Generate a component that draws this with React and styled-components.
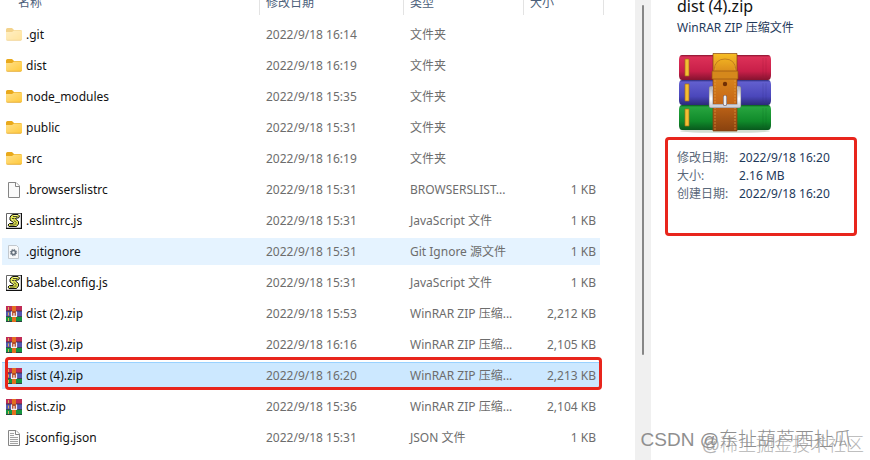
import React from "react";
import styled, { createGlobalStyle } from "styled-components";

const GlobalStyle = createGlobalStyle`
  * { box-sizing: border-box; }
  body {
    margin: 0;
    background: #fff;
    font-family: "Noto Sans", "Noto Sans CJK SC", sans-serif;
    font-size: 12px;
    color: #6d6d6d;
  }
`;

const Explorer = styled.div`
  position: relative;
  display: grid;
  grid-template-columns: minmax(0, 1fr) 16px 219px;
  height: 100vh;
  overflow: hidden;
`;

const ListPane = styled.main`
  padding: 0 31px 0 2px;
  min-width: 0;
`;

const FileTable = styled.table`
  width: 100%;
  table-layout: fixed;
  border-collapse: separate;
  border-spacing: 0;
`;

const Col = styled.col`
  width: ${(p) => p.$width || "auto"};
`;

const HeadCell = styled.th`
  height: 17px;
  padding: 0 0 2px;
  font-weight: 400;
`;

const SortButton = styled.button`
  display: flex;
  align-items: flex-end;
  width: 100%;
  height: 15px;
  padding: 0 0 4px ${(p) => p.$indent || "6px"};
  border: 0;
  border-right: 1px solid #e3e3e3;
  background: none;
  color: #4c607a;
  font: inherit;
  line-height: 17px;
`;

const FileRow = styled.tr`
  position: relative;
  --fill: ${(p) => (p.$state === "selected" ? "#cce8ff" : p.$state === "hover" ? "#e5f3ff" : "transparent")};
  --edge: ${(p) => (p.$state === "selected" ? "#99d1ff" : "transparent")};
`;

const Cell = styled.td`
  height: 31px;
  padding: 0 4px 0 6px;
  border-top: 4px solid transparent;
  background: var(--fill);
  background-clip: padding-box;
  box-shadow: inset 0 1px var(--edge);
  line-height: 27px;
  white-space: nowrap;
  overflow: hidden;
  text-align: ${(p) => p.$align || "left"};
`;

const NameCell = styled(Cell)`
  padding-left: 4px;
  color: #111;
`;

const FileName = styled.span`
  display: flex;
  align-items: center;
  gap: 4px;
  svg { flex: none; }
`;

const EdgeCell = styled.td`
  padding: 0;
`;

const Marker = styled.span`
  position: absolute;
  inset: ${(p) => p.$inset};
  border: 3px solid #e8251c;
  border-radius: 4px;
  pointer-events: none;
`;

const Track = styled.div`
  display: flex;
  justify-content: center;
  padding-top: 5px;
  background: #f0f0f0;
`;

const Thumb = styled.div`
  width: 2px;
  height: 77%;
  border-radius: 1px;
  background: #868686;
`;

const Preview = styled.aside`
  padding-left: 14px;
  color: #1e395b;
`;

const Title = styled.h1`
  margin: -5px 0 0 12px;
  color: #111;
  font-size: 16px;
  font-weight: 400;
  line-height: 22px;
`;

const Kind = styled.p`
  margin: 0 0 14px 12px;
  line-height: 22px;
`;

const Art = styled.div`
  margin-left: 12px;
  height: 84px;
`;

const Details = styled.dl`
  display: grid;
  grid-template-columns: 62px 1fr;
  align-content: start;
  width: 192px;
  height: 99px;
  margin: 0;
  padding: 9px 0 0 9px;
  border: 3px solid #e8251c;
  border-radius: 4px;
  line-height: 18px;
`;

const Term = styled.dt`
  color: #5a6779;
`;

const Value = styled.dd`
  margin: 0;
`;

const Watermark = styled.span`
  position: absolute;
  right: ${(p) => p.$right};
  bottom: ${(p) => p.$bottom};
  color: ${(p) => p.$color};
  font-family: "Liberation Sans", "Noto Sans CJK SC", sans-serif;
  font-size: ${(p) => p.$size};
  font-weight: 300;
  line-height: 24px;
  white-space: nowrap;
  pointer-events: none;
`;

function FolderIcon({ faded }) {
  return (
    <svg width="16" height="16" viewBox="0 1 16 16" opacity={faded ? 0.5 : 1} aria-hidden="true">
      <defs>
        <linearGradient id="folderFront" x1="0" y1="0" x2="1" y2="1">
          <stop offset="0" stopColor="#ffe08a" />
          <stop offset="1" stopColor="#ffc93c" />
        </linearGradient>
      </defs>
      <path d="M0 2.500Q0 1 1.500 1H6L8 3H14.500Q16 3 16 4.500V8H0Z" fill="#e9a91b" transform="translate(0 1)" />
      <path d="M0 6H6L8 4.500H15Q16 4.500 16 5.500V13Q16 14.500 14.500 14.500H1.500Q0 14.500 0 13Z" fill="url(#folderFront)" />
      <path d="M.5 14Q1 14.300 1.500 14.300H14.500Q15.200 14.300 15.600 13.600" fill="none" stroke="#dda02a" strokeWidth=".7" />
    </svg>
  );
}

function PageIcon({ lines }) {
  return (
    <svg width="16" height="16" viewBox="0 0 16 16" aria-hidden="true">
      <path d="M2.500.5H10L13.500 4V15.500H2.500Z" fill="#fafafa" stroke="#858585" />
      <path d="M9.500.5V4.500H13.500" fill="#fff" stroke="#858585" />
      {lines && <path d="M4 3.500H8M4 5.500H8M4 7.500H12M4 9.500H12M4 11.500H12M4 13.500H12" stroke="#a2a2a2" />}
    </svg>
  );
}

function GearFileIcon() {
  return (
    <svg width="16" height="16" viewBox="0 0 16 16" aria-hidden="true">
      <path d="M2.500 1.500H10.500L12.500 3.500V14.500H2.500Z" fill="#f8f9fa" stroke="#c2c8ce" />
      <circle cx="7.500" cy="8.500" r="2" fill="none" stroke="#66717d" strokeWidth="1.500" />
      <circle cx="7.500" cy="8.500" r="3.200" fill="none" stroke="#66717d" strokeWidth="1" strokeDasharray="1.300 1.210" />
    </svg>
  );
}

function ScriptIcon() {
  return (
    <svg width="16" height="16" viewBox="0 0 16 16" aria-hidden="true">
      <path d="M.5.5H15.500V15.500H.5Z" fill="#fff" stroke="#666" />
      <path d="M15.400 0V15.400H0" fill="none" stroke="#111" strokeWidth="1.200" />
      <path d="M5 2.500L7 1.500H12L13.500 3L12.500 5H10L9.500 6L12.500 8.500V11L10.500 13.500H3L2 12L3.500 10.500H7L7.500 9.500L4 7V4.500Z" fill="#e6ea52" stroke="#111" strokeWidth="1" />
      <path d="M7 3.500H11.500M6 5.500H8.500M7 7L10.500 9.500M8.500 11H10.500M4 12H8.500" fill="none" stroke="#222" strokeWidth=".8" />
      <path d="M8 2.500H11M5.500 6.500L8 8" stroke="#fffdb5" strokeWidth=".7" />
    </svg>
  );
}

function ArchiveIcon() {
  return (
    <svg width="16" height="16" viewBox="0 0 16 16" aria-hidden="true">
      <path d="M0 0H16V5H0Z" fill="#c02b55" />
      <path d="M0 5H16V10.500H0Z" fill="#5556b0" />
      <path d="M0 10.500H16V16H0Z" fill="#16943f" />
      <path d="M0 5H16M0 10.500H16M0 15.500H16" stroke="#333044" strokeWidth=".8" />
      <path d="M2.500 1V4M2.500 6.500V9.500M2.500 12V15" stroke="#d7b158" />
      <path d="M6 0H10V16H6Z" fill="#e2701f" />
      <path d="M6 5H10V10H6Z" fill="#b54d26" />
      <path d="M5.500 5.500V10.300H10.500V5.500M8 7V10" fill="none" stroke="#f3edf0" strokeWidth="1.200" />
    </svg>
  );
}

function ArchiveArt() {
  const books = [
    { y: 2, id: "red", top: "#dd3158", mid: "#c81f49", low: "#85132f" },
    { y: 27, id: "blue", top: "#625fce", mid: "#4b47bb", low: "#2b2a79" },
    { y: 52, id: "green", top: "#27a53f", mid: "#108a2a", low: "#08591d" },
  ];
  return (
    <svg width="96" height="82" viewBox="0 0 96 82" role="img" aria-label="WinRAR">
      <defs>
        {books.map((b) => (
          <linearGradient key={b.id} id={b.id} x1="0" y1="0" x2="0" y2="1">
            <stop offset="0" stopColor={b.low} />
            <stop offset=".08" stopColor={b.top} />
            <stop offset=".65" stopColor={b.mid} />
            <stop offset="1" stopColor={b.low} />
          </linearGradient>
        ))}
        <linearGradient id="strap" x1="0" y1="0" x2="0" y2="1">
          <stop offset="0" stopColor="#f7bd24" />
          <stop offset=".25" stopColor="#d98a1b" />
          <stop offset=".6" stopColor="#c96a18" />
          <stop offset="1" stopColor="#89420f" />
        </linearGradient>
        <linearGradient id="metal" x1="0" y1="0" x2="0" y2="1">
          <stop offset="0" stopColor="#b5b5bd" />
          <stop offset=".6" stopColor="#fff" />
          <stop offset="1" stopColor="#d0d0d8" />
        </linearGradient>
      </defs>
      <ellipse cx="48" cy="78" rx="45" ry="2" fill="#d2ddd2" />
      {books.map((b) => (
        <g key={b.id}>
          <path d={`M5 ${b.y}H91Q94 ${b.y} 94 ${b.y + 5}V${b.y + 20}Q94 ${b.y + 25} 91 ${b.y + 25}H5Q2 ${b.y + 25} 2 ${b.y + 20}V${b.y + 5}Q2 ${b.y} 5 ${b.y}Z`} fill={`url(#${b.id})`} />
          <path d={`M8 ${b.y + 4}H12V${b.y + 21}H8Z`} fill="#f3bf34" stroke="#a36d18" strokeWidth=".7" />
          <path d={`M86 ${b.y + 3}V${b.y + 22}M89 ${b.y + 3}V${b.y + 22}`} stroke={b.low} strokeWidth=".6" opacity=".3" />
        </g>
      ))}
      <path d="M36 .5H60V78H36Z" fill="url(#strap)" stroke="#85430f" strokeWidth=".7" />
      <path d="M38 3V77M58 3V77" stroke="#e9a64c" strokeWidth=".6" strokeDasharray="2 1" />
      <path d="M37 17Q38 6 48 6Q58 6 59 17" fill="none" stroke="#b8731c" strokeWidth=".8" />
      <path d="M35 18H61V26H35Z" fill="#d5881c" stroke="#955013" strokeWidth=".7" />
      <circle cx="48" cy="31" r="2.200" fill="#713005" />
      <path d="M36 35H34V53H62V35H60" fill="none" stroke="#83838d" strokeWidth="4.200" strokeLinejoin="round" />
      <path d="M36 35H34V53H62V35H60" fill="none" stroke="url(#metal)" strokeWidth="3.200" strokeLinejoin="round" />
      <path d="M48 44V51" stroke="#67525a" strokeWidth="4" strokeLinecap="round" />
      <path d="M48 44V51" stroke="#eee" strokeWidth="2.800" strokeLinecap="round" />
    </svg>
  );
}

const icons = {
  hidden: <FolderIcon faded />,
  folder: <FolderIcon />,
  page: <PageIcon />,
  text: <PageIcon lines />,
  gear: <GearFileIcon />,
  script: <ScriptIcon />,
  zip: <ArchiveIcon />,
};

const files = [
  ["hidden", ".git", "16:14", "文件夹", ""],
  ["folder", "dist", "16:19", "文件夹", ""],
  ["folder", "node_modules", "15:35", "文件夹", ""],
  ["folder", "public", "15:31", "文件夹", ""],
  ["folder", "src", "16:19", "文件夹", ""],
  ["page", ".browserslistrc", "15:31", "BROWSERSLIST...", "1 KB"],
  ["script", ".eslintrc.js", "15:31", "JavaScript 文件", "1 KB"],
  ["gear", ".gitignore", "15:31", "Git Ignore 源文件", "1 KB", "hover"],
  ["script", "babel.config.js", "15:31", "JavaScript 文件", "1 KB"],
  ["zip", "dist (2).zip", "15:53", "WinRAR ZIP 压缩...", "2,212 KB"],
  ["zip", "dist (3).zip", "16:16", "WinRAR ZIP 压缩...", "2,105 KB"],
  ["zip", "dist (4).zip", "16:20", "WinRAR ZIP 压缩...", "2,213 KB", "selected"],
  ["zip", "dist.zip", "15:36", "WinRAR ZIP 压缩...", "2,104 KB"],
  ["text", "jsconfig.json", "15:31", "JSON 文件", "1 KB"],
];

export default function App() {
  return (
    <Explorer>
      <GlobalStyle />
      <ListPane>
        <FileTable>
          <colgroup>
            <Col />
            <Col $width="144px" />
            <Col $width="120px" />
            <Col $width="76px" />
            <Col $width="4px" />
          </colgroup>
          <thead>
            <tr>
              <HeadCell><SortButton $indent="16px">名称</SortButton></HeadCell>
              <HeadCell><SortButton>修改日期</SortButton></HeadCell>
              <HeadCell><SortButton>类型</SortButton></HeadCell>
              <HeadCell colSpan={2}><SortButton>大小</SortButton></HeadCell>
            </tr>
          </thead>
          <tbody>
            {files.map(([icon, name, time, type, size, state]) => (
              <FileRow key={name} $state={state} aria-selected={state === "selected"}>
                <NameCell><FileName>{icons[icon]}{name}</FileName></NameCell>
                <Cell>2022/9/18 {time}</Cell>
                <Cell>{type}</Cell>
                <Cell $align="right">{size}</Cell>
                <EdgeCell>{state === "selected" && <Marker $inset="-1px 2px -1px 3px" />}</EdgeCell>
              </FileRow>
            ))}
          </tbody>
        </FileTable>
      </ListPane>
      <Track><Thumb /></Track>
      <Preview>
        <Title>dist (4).zip</Title>
        <Kind>WinRAR ZIP 压缩文件</Kind>
        <Art><ArchiveArt /></Art>
        <Details>
          <Term>修改日期:</Term><Value>2022/9/18 16:20</Value>
          <Term>大小:</Term><Value>2.16 MB</Value>
          <Term>创建日期:</Term><Value>2022/9/18 16:20</Value>
        </Details>
      </Preview>
      <Watermark $right="6px" $bottom="3px" $size="18px" $color="#b4b4b4">@稀土掘金技术社区</Watermark>
      <Watermark $right="18px" $bottom="8px" $size="19px" $color="#8f8f8f">CSDN @东扯葫芦西扯瓜</Watermark>
    </Explorer>
  );
}
